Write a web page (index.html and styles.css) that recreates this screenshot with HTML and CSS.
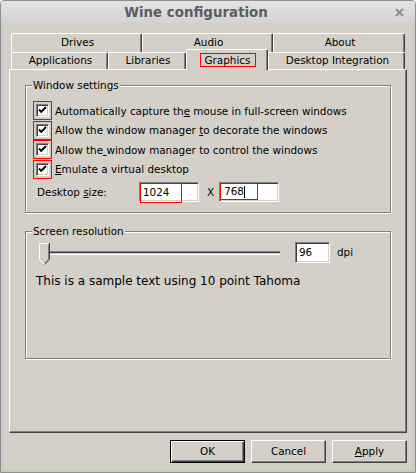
FILE: index.html
```html
<!DOCTYPE html>
<html lang="en">
<head>
    <meta charset="UTF-8">
    <title>Wine configuration</title>
    <link rel="stylesheet" href="styles.css">
</head>
<body>
    <div class="window">
        <div class="titlebar">
            <span class="title">Wine configuration</span>
            <span class="close">
                <svg width="9" height="9" viewBox="0 0 9 9"><path d="M1 1L8 8M8 1L1 8" stroke="#8e8e8e" stroke-width="2"/></svg>
            </span>
        </div>

        <div class="client">
            <!-- two rows of tabs, the front row holds the selected page -->
            <div class="tabs">
                <div class="tab-row back">
                    <div class="tab tab-drives">Drives</div>
                    <div class="tab tab-audio">Audio</div>
                    <div class="tab tab-about">About</div>
                </div>
                <div class="tab-row front">
                    <div class="tab tab-apps">Applications</div>
                    <div class="tab tab-libs">Libraries</div>
                    <div class="tab tab-graphics selected"><span class="mark">Graphics</span></div>
                    <div class="tab tab-desktop">Desktop Integration</div>
                </div>
            </div>

            <div class="panel">
                <fieldset class="group">
                    <legend>Window settings</legend>
                    <div class="option">
                        <span class="mark box"><span class="check"><svg width="11" height="11" viewBox="0 0 11 11"><path d="M2 4.5L4.2 6.8L9 2" stroke="#000" stroke-width="1.9" fill="none"/></svg></span></span>
                        <span>Automatically capture th<u>e</u> mouse in full-screen windows</span>
                    </div>
                    <div class="option">
                        <span class="mark box"><span class="check"><svg width="11" height="11" viewBox="0 0 11 11"><path d="M2 4.5L4.2 6.8L9 2" stroke="#000" stroke-width="1.9" fill="none"/></svg></span></span>
                        <span>Allow the window manager <u>t</u>o decorate the windows</span>
                    </div>
                    <div class="option">
                        <span class="mark box"><span class="check"><svg width="11" height="11" viewBox="0 0 11 11"><path d="M2 4.5L4.2 6.8L9 2" stroke="#000" stroke-width="1.9" fill="none"/></svg></span></span>
                        <span>Allow the<u> </u>window manager to control the windows</span>
                    </div>
                    <div class="option">
                        <span class="mark box"><span class="check"><svg width="11" height="11" viewBox="0 0 11 11"><path d="M2 4.5L4.2 6.8L9 2" stroke="#000" stroke-width="1.9" fill="none"/></svg></span></span>
                        <span><u>E</u>mulate a virtual desktop</span>
                    </div>
                    <div class="desktop-size">
                        <span class="size-label">Desktop <u>s</u>ize:</span>
                        <div class="field size-field"><span class="mark value-w">1024</span></div>
                        <span class="by">X</span>
                        <div class="field size-field"><span class="mark value-h">768<span class="caret"></span></span></div>
                    </div>
                </fieldset>

                <fieldset class="group res">
                    <legend>Screen resolution</legend>
                    <div class="dpi-row">
                        <div class="slider">
                            <div class="track"></div>
                            <svg class="thumb" width="11" height="22" viewBox="0 0 11 22">
                                <path d="M0.5 16.5V0.5H10.5V16.5L5.5 21.5Z" fill="#d4d0c8"/>
                                <path d="M0.5 16.5V0.5H9.5" stroke="#fff" fill="none"/>
                                <path d="M10.5 0V16.5L5.5 21.5" stroke="#404040" fill="none"/>
                                <path d="M9.5 1V16L5.5 20" stroke="#808080" fill="none"/>
                                <path d="M0.5 16.5L5 21" stroke="#fff" fill="none"/>
                            </svg>
                        </div>
                        <div class="field dpi-field">96</div>
                        <span class="dpi-unit">dpi</span>
                    </div>
                    <div class="sample">This is a sample text using 10 point Tahoma</div>
                </fieldset>
            </div>

            <div class="buttons">
                <div class="btn default">OK</div>
                <div class="btn">Cancel</div>
                <div class="btn"><u>A</u>pply</div>
            </div>
        </div>
    </div>
</body>
</html>
```

FILE: styles.css
```css
/* Classic grey dialog look */
* {
    box-sizing: border-box;
}

body {
    margin: 0;
    background: #fff;
    font-family: "DejaVu Sans", sans-serif;
    font-size: 10.4px;
    color: #000;
}

.window {
    width: 416px;
    height: 473px;
    display: flex;
    flex-direction: column;
    border: 1px solid #8f8f8f;
    border-radius: 4px 4px 0 0;
    background: #d4d0c8;
    overflow: hidden;
}

.titlebar {
    flex: none;
    height: 22px;
    display: flex;
    align-items: center;
    background: linear-gradient(#e3e3e3, #d3d3d3);
}

.title {
    flex: 1;
    text-align: center;
    font-weight: bold;
    font-size: 13.4px;
    color: #5d5d5d;
}

.close {
    width: 24px;
    padding-right: 8px;
    display: flex;
    justify-content: center;
}

.client {
    flex: 1;
    border: 2px solid #c8c8c8;
    border-top: 0;
    padding: 10px 6px 0;
}

/* Tabs */
.tabs {
    width: 398px;
}

.tab-row {
    display: flex;
    padding-left: 2px;
}

.tab {
    border: 1px solid;
    border-color: #fff #404040 transparent #fff;
    border-bottom: 0;
    border-radius: 2px 2px 0 0;
    box-shadow: inset -1px 0 #808080;
    background: #d4d0c8;
    text-align: center;
    padding-left: 2px;
    white-space: nowrap;
}

.back .tab {
    height: 19px;
    line-height: 17px;
}

.front {
    height: 17px;
}

.front .tab {
    height: 17px;
    line-height: 15px;
}

.tab-drives { width: 131px; }
.tab-audio { width: 131px; }
.tab-about { width: 132px; }
.tab-apps { width: 97px; }
.tab-libs { width: 78px; }
.tab-graphics { width: 82px; }
.tab-desktop { width: 137px; }

.front .tab.selected {
    position: relative;
    z-index: 1;
    height: 21px;
    margin-top: -3px;
    padding-top: 3px;
    line-height: 12px;
}

/* red outlines marking the changed settings */
.mark {
    border: 1px solid #f00;
}

.selected .mark {
    display: inline-block;
    height: 14px;
    padding: 0 5px 0 4px;
}

/* Page */
.panel {
    width: 398px;
    height: 364px;
    border: 1px solid;
    border-color: #fff #404040 #404040 #fff;
    box-shadow: inset -1px -1px #808080;
    padding: 9px 15px 0;
}

.group {
    margin: 0;
    min-width: 0;
    height: 134px;
    padding: 9px 0 0 7px;
    border: 1px solid #808080;
    box-shadow: inset 1px 1px #fff, 1px 1px #fff;
}

.group legend {
    margin-left: -1px;
    padding: 0 1px;
    line-height: 13px;
    background: #d4d0c8;
}

.option {
    display: flex;
    align-items: center;
    height: 19.5px;
}

.mark.box {
    display: block;
    padding: 2px;
    margin-right: 3px;
}

.check {
    display: block;
    width: 13px;
    height: 13px;
    border: 1px solid;
    border-color: #808080 #fff #fff #808080;
    box-shadow: inset 1px 1px #404040, inset -1px -1px #d4d0c8;
    background: #fff;
}

.check svg {
    display: block;
}

.desktop-size {
    display: flex;
    align-items: center;
    margin-top: 3px;
    height: 20px;
}

.size-label {
    width: 102px;
    margin-left: 4px;
}

.by {
    margin: 0 5px 0 8px;
}

.field {
    background: #fff;
    border: 1px solid;
    border-color: #808080 #fff #fff #808080;
    box-shadow: inset 1px 1px #404040, inset -1px -1px #d4d0c8;
}

.size-field {
    width: 60px;
    height: 20px;
}

.value-w,
.value-h {
    display: block;
    padding-left: 2px;
}

.value-w {
    width: 42px;
    height: 20px;
    line-height: 16px;
}

.value-h {
    width: 38px;
    height: 17px;
    line-height: 15px;
    padding-left: 3px;
}

.caret {
    display: inline-block;
    width: 1px;
    height: 12px;
    background: #000;
    vertical-align: middle;
}

.res {
    margin-top: 12px;
    padding-top: 4px;
}

.dpi-row {
    display: flex;
    align-items: flex-start;
    height: 22px;
}

.slider {
    position: relative;
    width: 241px;
    height: 22px;
    margin-left: 6px;
}

.track {
    width: 240px;
    height: 4px;
    margin: 9px 0 0 1px;
    border-top: 1px solid #808080;
    border-bottom: 1px solid #fff;
    background: linear-gradient(#404040 50%, #d4d0c8 50%);
}

.thumb {
    position: absolute;
    left: 0;
    top: 1px;
}

.dpi-field {
    width: 35px;
    height: 21px;
    margin-left: 15px;
    padding-left: 3px;
    line-height: 19px;
}

.dpi-unit {
    margin-left: 7px;
    line-height: 21px;
}

.sample {
    margin: 10px 0 0 3px;
    font-size: 12px;
    line-height: 14px;
}

/* Dialog buttons */
.buttons {
    width: 398px;
    display: flex;
    justify-content: flex-end;
    gap: 6px;
    margin-top: 7px;
}

.btn {
    width: 75px;
    height: 23px;
    border: 1px solid;
    border-color: #fff #404040 #404040 #fff;
    box-shadow: inset -1px -1px #808080;
    text-align: center;
    line-height: 21px;
}

.btn.default {
    border-color: #000;
    box-shadow: inset 1px 1px #fff, inset -1px -1px #404040, inset -2px -2px #808080;
}
```
